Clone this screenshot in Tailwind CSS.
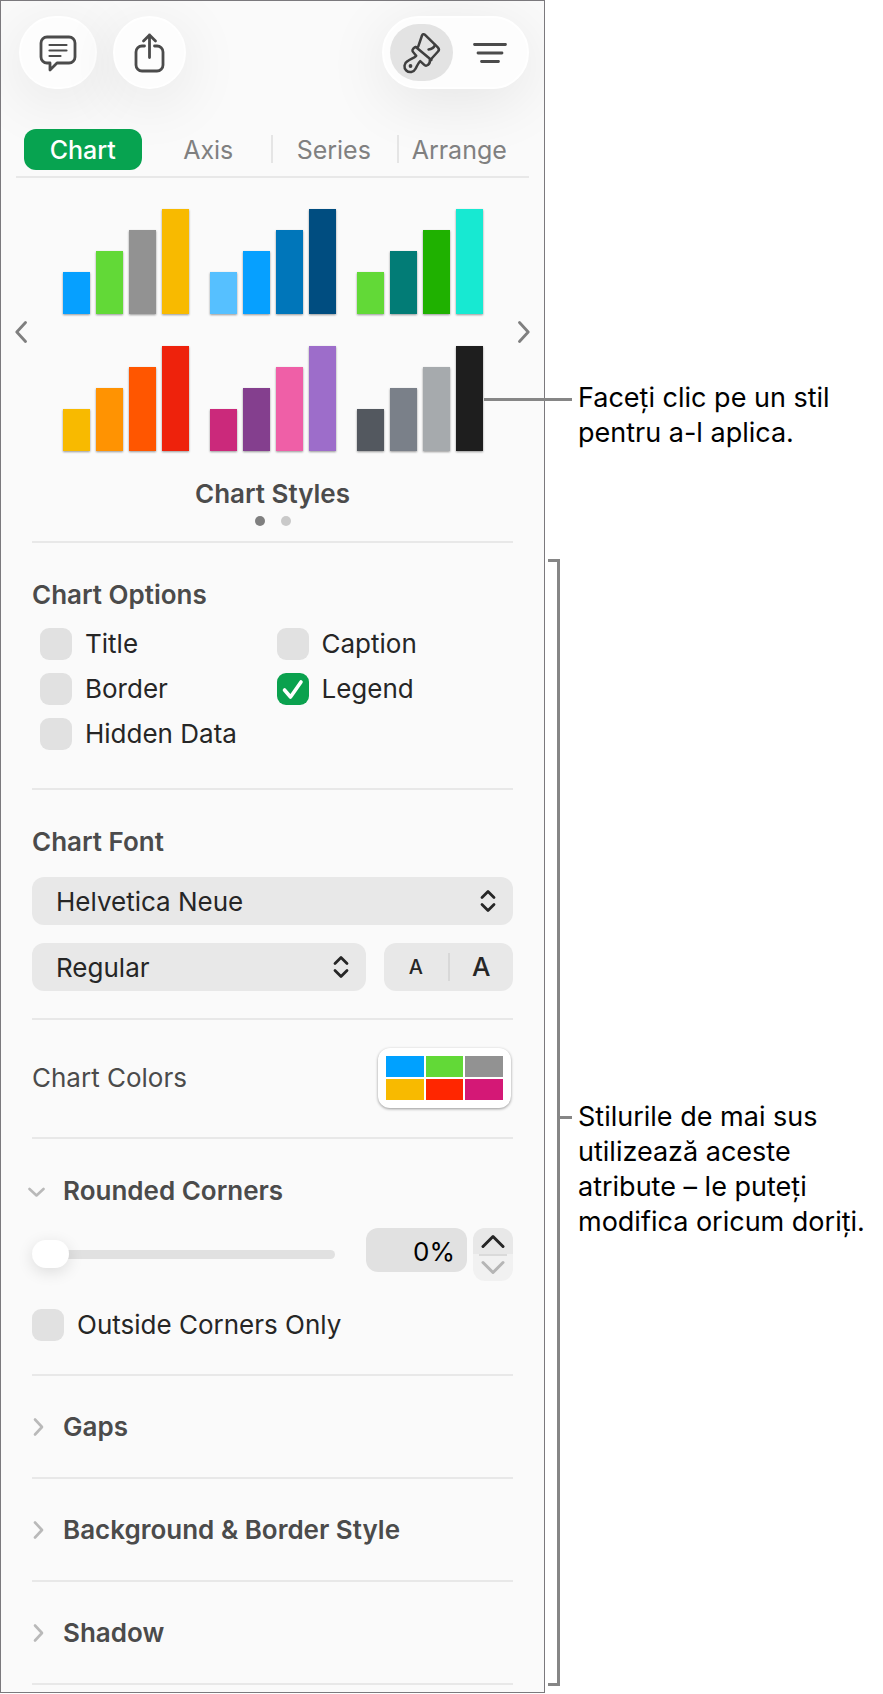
<!DOCTYPE html>
<html lang="ro">
<head>
    <meta charset="UTF-8">
    <meta name="viewport" content="width=device-width, initial-scale=1.0">
    <title>Chart Styles</title>
    <script src="https://cdn.jsdelivr.net/npm/@tailwindcss/browser@4"></script>
</head>
<body class="bg-white font-['Inter','Liberation_Sans',sans-serif] text-[26px] leading-8 text-[#262626]">
    <div class="flex">
        <!-- Format sidebar -->
        <main class="flex-1 min-w-0 bg-[#fafafa] border border-[#7b797d] overflow-hidden">
            <!-- Toolbar -->
            <header class="flex items-center pt-[15px] pl-[18px] pr-[15px]">
                <button aria-label="Comment" class="flex items-center justify-center w-[78px] h-[73px] rounded-full bg-[#fdfdfd] border-2 border-white shadow-[0_12px_64px_rgba(0,0,0,0.09)]">
                    <svg class="w-[38px] h-[38px]" viewBox="0 0 38 38" fill="none" stroke="#4b4b4b" stroke-linecap="round" stroke-linejoin="round">
                        <path stroke-width="2.8" d="M8 3h22a6 6 0 0 1 6 6v14a6 6 0 0 1-6 6H18l-7 7v-7H8a6 6 0 0 1-6-6V9a6 6 0 0 1 6-6z" />
                        <path stroke-width="2.2" d="M10.500 11h17M10.500 16.500h17M10.500 22h11" />
                    </svg>
                </button>
                <button aria-label="Share" class="flex items-center justify-center ml-4 w-[73px] h-[73px] rounded-full bg-[#fdfdfd] border-2 border-white shadow-[0_12px_64px_rgba(0,0,0,0.09)]">
                    <svg class="w-8 h-10" viewBox="0 0 32 40" fill="none" stroke="#4b4b4b" stroke-width="2.8" stroke-linecap="round" stroke-linejoin="round">
                        <path d="M10.500 13H8a6 6 0 0 0-6 6v13a6 6 0 0 0 6 6h15a6 6 0 0 0 6-6V19a6 6 0 0 0-6-6h-2.500" />
                        <path d="M15.500 24.500V2M9.500 8l6-6 6 6" />
                    </svg>
                </button>
                <div class="flex items-center ml-auto w-[147px] h-[73px] pl-1.5 rounded-full bg-[#fdfdfd] border-2 border-white shadow-[0_12px_64px_rgba(0,0,0,0.09)]">
                    <button aria-label="Format" class="flex shrink-0 items-center justify-center w-[63px] h-[57px] rounded-full bg-[#e3e3e3]">
                        <svg class="w-10 h-[42px]" viewBox="0 0 40 42" fill="none" stroke="#3f3f3f" stroke-width="2.500" stroke-linecap="round" stroke-linejoin="round">
                            <path d="M16.200 14.600L20 3.500c.4-1.400 1.800-1.800 2.800-.8l13 12.600c1.300 1.300 1.400 2.900.2 4.200l-6.800 7.500" />
                            <path d="M26.500 17.500c3.200-.3 5.400-1.800 6.500-4.500" />
                            <path d="M13.800 15l15.600 13" />
                            <path d="M13.800 15c-1.200-.2-3.800 2.300-3.300 4 .3 1.200 2.600 3.200 3.700 4.800-2.200 2.200-5.600 3-8.700 5.400a5.800 5.800 0 1 0 8 7.600c1.700-2.900 2.500-5.700 4.700-7.700l3.800 3.600c1.100 1.100 2.700 1.200 3.900.2 2-1.500 2.300-3 1.900-4.900" />
                            <circle cx="8.500" cy="34" r="1.900" fill="#3f3f3f" stroke="none" />
                        </svg>
                    </button>
                    <button aria-label="Organize" class="flex flex-1 items-center justify-center h-[57px]">
                        <svg class="w-[34px] h-6" viewBox="0 0 34 24" fill="none" stroke="#4b4b4b" stroke-width="2.8" stroke-linecap="round">
                            <path d="M1.500 3.500h31M5 12h24M8.500 20.500h17" />
                        </svg>
                    </button>
                </div>
            </header>

            <!-- Tabs -->
            <nav class="grid grid-cols-4 mt-10 mx-[15px] pl-1 pr-[7px] pb-1.5 border-b-2 border-[#e8e8e8] text-center text-[25px] text-[#808080]">
                <button class="mx-auto w-[118px] h-[41px] rounded-xl bg-[#07a350] text-white font-medium">Chart</button>
                <button class="h-[41px]">Axis</button>
                <button class="relative h-[41px] before:absolute before:left-0 before:top-1.5 before:h-7 before:w-0.5 before:bg-[#e5e5e5]">Series</button>
                <button class="relative h-[41px] before:absolute before:left-0 before:top-1.5 before:h-7 before:w-0.5 before:bg-[#e5e5e5]">Arrange</button>
            </nav>

            <!-- Chart style thumbnails -->
            <section class="mt-[31px] px-3.5">
                <div class="flex items-center justify-between">
                    <button aria-label="Previous styles" class="pt-1">
                        <svg class="w-3 h-6" viewBox="0 0 12 24" fill="none" stroke="#7f7f7f" stroke-width="2.8" stroke-linecap="round" stroke-linejoin="round">
                            <path d="M10.500 2.500L1.800 12l8.700 9.500" />
                        </svg>
                    </button>
                    <div class="grid grid-cols-3 gap-x-[21px] gap-y-8">
                        <button aria-label="Style 1" class="flex items-end gap-1.5 h-[105px] *:w-[27px] *:shadow-[0_1px_2px_rgba(0,0,0,0.4)]">
                            <span class="h-[42px] bg-[#06a0ff]"></span>
                            <span class="h-[63px] bg-[#62d937]"></span>
                            <span class="h-[84px] bg-[#929292]"></span>
                            <span class="h-[105px] bg-[#f8ba00]"></span>
                        </button>
                        <button aria-label="Style 2" class="flex items-end gap-1.5 h-[105px] *:w-[27px] *:shadow-[0_1px_2px_rgba(0,0,0,0.4)]">
                            <span class="h-[42px] bg-[#56c0ff]"></span>
                            <span class="h-[63px] bg-[#06a0ff]"></span>
                            <span class="h-[84px] bg-[#0076ba]"></span>
                            <span class="h-[105px] bg-[#004d80]"></span>
                        </button>
                        <button aria-label="Style 3" class="flex items-end gap-1.5 h-[105px] *:w-[27px] *:shadow-[0_1px_2px_rgba(0,0,0,0.4)]">
                            <span class="h-[42px] bg-[#62d937]"></span>
                            <span class="h-[63px] bg-[#027c76]"></span>
                            <span class="h-[84px] bg-[#1fb100]"></span>
                            <span class="h-[105px] bg-[#17e9d2]"></span>
                        </button>
                        <button aria-label="Style 4" class="flex items-end gap-1.5 h-[105px] *:w-[27px] *:shadow-[0_1px_2px_rgba(0,0,0,0.4)]">
                            <span class="h-[42px] bg-[#f8ba00]"></span>
                            <span class="h-[63px] bg-[#ff9302]"></span>
                            <span class="h-[84px] bg-[#ff5600]"></span>
                            <span class="h-[105px] bg-[#ee220c]"></span>
                        </button>
                        <button aria-label="Style 5" class="flex items-end gap-1.5 h-[105px] *:w-[27px] *:shadow-[0_1px_2px_rgba(0,0,0,0.4)]">
                            <span class="h-[42px] bg-[#cb297b]"></span>
                            <span class="h-[63px] bg-[#843f8e]"></span>
                            <span class="h-[84px] bg-[#ef5fa7]"></span>
                            <span class="h-[105px] bg-[#9d6dca]"></span>
                        </button>
                        <button aria-label="Style 6" class="flex items-end gap-1.5 h-[105px] *:w-[27px] *:shadow-[0_1px_2px_rgba(0,0,0,0.4)]">
                            <span class="h-[42px] bg-[#53585f]"></span>
                            <span class="h-[63px] bg-[#7a8089]"></span>
                            <span class="h-[84px] bg-[#a6aaad]"></span>
                            <span class="h-[105px] bg-[#1e1e1e]"></span>
                        </button>
                    </div>
                    <button aria-label="Next styles" class="pt-1">
                        <svg class="w-3 h-6" viewBox="0 0 12 24" fill="none" stroke="#7f7f7f" stroke-width="2.8" stroke-linecap="round" stroke-linejoin="round">
                            <path d="M1.500 2.500L10.200 12l-8.700 9.500" />
                        </svg>
                    </button>
                </div>
                <h2 class="mt-[27px] text-center font-semibold text-[#4b4b4b]">Chart Styles</h2>
                <div class="flex justify-center gap-4 mt-1.5">
                    <span class="size-2.5 rounded-full bg-[#7f7f7f]"></span>
                    <span class="size-2.5 rounded-full bg-[#c9c9c9]"></span>
                </div>
            </section>

            <div class="mx-[31px] mt-[15px] border-t-2 border-[#e8e8e8] *:border-b-2 *:border-[#e8e8e8]">
                <!-- Chart Options -->
                <section class="pt-9 pb-[38px]">
                    <h2 class="font-semibold text-[#4b4b4b]">Chart Options</h2>
                    <div class="grid grid-cols-2 gap-y-[13px] mt-[17px] pl-2">
                        <label class="flex items-center gap-[13px]">
                            <input type="checkbox" class="appearance-none size-8 rounded-[9px] bg-[#e1e1e1]">
                            Title
                        </label>
                        <label class="flex items-center gap-[13px]">
                            <input type="checkbox" class="appearance-none size-8 rounded-[9px] bg-[#e1e1e1]">
                            Caption
                        </label>
                        <label class="flex items-center gap-[13px]">
                            <input type="checkbox" class="appearance-none size-8 rounded-[9px] bg-[#e1e1e1]">
                            Border
                        </label>
                        <label class="relative flex items-center gap-[13px]">
                            <input type="checkbox" checked class="appearance-none size-8 rounded-[9px] bg-[#e1e1e1] checked:bg-[#0aa14e]">
                            <svg class="absolute left-0 top-0 size-8 pointer-events-none" viewBox="0 0 32 32" fill="none" stroke="white" stroke-width="3.6" stroke-linecap="round" stroke-linejoin="round">
                                <path d="M7.500 17l6 7L24 9" />
                            </svg>
                            Legend
                        </label>
                        <label class="flex items-center gap-[13px]">
                            <input type="checkbox" class="appearance-none size-8 rounded-[9px] bg-[#e1e1e1]">
                            Hidden Data
                        </label>
                    </div>
                </section>

                <!-- Chart Font -->
                <section class="pt-9 pb-[27px]">
                    <h2 class="font-semibold text-[#4b4b4b]">Chart Font</h2>
                    <div class="relative mt-[19px]">
                        <select aria-label="Font family" class="appearance-none block w-full h-12 pt-0.5 pl-6 rounded-xl bg-[#e8e8e8]">
                            <option>Helvetica Neue</option>
                        </select>
                        <svg class="absolute right-[17px] top-3 w-4 h-6 pointer-events-none" viewBox="0 0 16 24" fill="none" stroke="#262626" stroke-width="2.8" stroke-linecap="round" stroke-linejoin="round">
                            <path d="M2 8.500l6-6 6 6M2 15.500l6 6 6-6" />
                        </svg>
                    </div>
                    <div class="flex gap-[18px] mt-[18px]">
                        <div class="relative flex-1">
                            <select aria-label="Typeface" class="appearance-none block w-full h-12 pt-0.5 pl-6 rounded-xl bg-[#e8e8e8]">
                                <option>Regular</option>
                            </select>
                            <svg class="absolute right-[17px] top-3 w-4 h-6 pointer-events-none" viewBox="0 0 16 24" fill="none" stroke="#262626" stroke-width="2.8" stroke-linecap="round" stroke-linejoin="round">
                                <path d="M2 8.500l6-6 6 6M2 15.500l6 6 6-6" />
                            </svg>
                        </div>
                        <div class="flex items-center w-[129px] h-12 rounded-xl bg-[#e8e8e8] font-medium">
                            <button aria-label="Smaller" class="flex-1 text-[20px]">A</button>
                            <span class="w-0.5 h-7 bg-[#d8d8d8]"></span>
                            <button aria-label="Bigger" class="flex-1 text-[26px]">A</button>
                        </div>
                    </div>
                </section>

                <!-- Chart Colors -->
                <section class="flex items-center justify-between pt-7 pb-[29px] pr-0.5">
                    <h2 class="text-[#4b4b4b]">Chart Colors</h2>
                    <button aria-label="Chart Colors" class="grid grid-cols-3 gap-0.5 w-[133px] h-[60px] p-2 rounded-xl bg-white shadow-[0_1px_3px_rgba(0,0,0,0.4)]">
                        <span class="h-[21px] bg-[#00a1ff]"></span>
                        <span class="h-[21px] bg-[#62d937]"></span>
                        <span class="h-[21px] bg-[#929292]"></span>
                        <span class="h-[21px] bg-[#f8ba00]"></span>
                        <span class="h-[21px] bg-[#ff2600]"></span>
                        <span class="h-[21px] bg-[#d41876]"></span>
                    </button>
                </section>

                <!-- Rounded Corners -->
                <section class="pt-9 pb-[33px]">
                    <button aria-expanded="true" class="flex items-center gap-[15px] -ml-1 font-semibold text-[#4b4b4b]">
                        <svg class="size-5" viewBox="0 0 20 20" fill="none" stroke="#b9b9b9" stroke-width="2.6" stroke-linecap="round" stroke-linejoin="round">
                            <path d="M1.500 8l7 6.500 7-6.500" />
                        </svg>
                        Rounded Corners
                    </button>
                    <div class="flex items-center mt-[21px]">
                        <input type="range" aria-label="Rounded Corners" min="0" max="100" value="0" class="appearance-none flex-1 min-w-0 h-7 bg-transparent [&::-webkit-slider-runnable-track]:h-[9px] [&::-webkit-slider-runnable-track]:rounded-full [&::-webkit-slider-runnable-track]:bg-[#e1e1e1] [&::-webkit-slider-thumb]:appearance-none [&::-webkit-slider-thumb]:-mt-2.5 [&::-webkit-slider-thumb]:w-[37px] [&::-webkit-slider-thumb]:h-7 [&::-webkit-slider-thumb]:rounded-full [&::-webkit-slider-thumb]:bg-white [&::-webkit-slider-thumb]:shadow-[0_4px_16px_rgba(0,0,0,0.12)]">
                        <input type="text" aria-label="Corner radius" value="0%" class="self-start ml-[31px] w-[101px] h-11 pt-0.5 pr-3 rounded-xl bg-[#e1e1e1] text-right text-black">
                        <div class="ml-1.5 flex flex-col w-10 h-[53px] rounded-xl overflow-hidden bg-[#f1f1f1]">
                            <button aria-label="Increase" class="flex flex-1 items-center justify-center bg-[#e8e8e8]">
                                <svg class="w-6 h-4" viewBox="0 0 24 16" fill="none" stroke="#262626" stroke-width="3" stroke-linecap="round" stroke-linejoin="round">
                                    <path d="M2 13.500l10-10 10 10" />
                                </svg>
                            </button>
                            <span class="mx-1.5 h-0.5 bg-[#dadada]"></span>
                            <button aria-label="Decrease" class="flex flex-1 items-center justify-center">
                                <svg class="w-6 h-4" viewBox="0 0 24 16" fill="none" stroke="#b5b5b5" stroke-width="3" stroke-linecap="round" stroke-linejoin="round">
                                    <path d="M2 2.500l10 10 10-10" />
                                </svg>
                            </button>
                        </div>
                    </div>
                    <label class="flex items-center gap-[13px] mt-7">
                        <input type="checkbox" class="appearance-none size-8 rounded-[9px] bg-[#e1e1e1]">
                        Outside Corners Only
                    </label>
                </section>

                <!-- Collapsed groups -->
                <button aria-expanded="false" class="flex items-center gap-[15px] w-full h-[103px] font-semibold text-[#4b4b4b]">
                    <svg class="-ml-1 size-5" viewBox="0 0 20 20" fill="none" stroke="#b9b9b9" stroke-width="2.6" stroke-linecap="round" stroke-linejoin="round">
                        <path d="M7 2.500l7 7.500-7 7.500" />
                    </svg>
                    Gaps
                </button>
                <button aria-expanded="false" class="flex items-center gap-[15px] w-full h-[103px] font-semibold text-[#4b4b4b]">
                    <svg class="-ml-1 size-5" viewBox="0 0 20 20" fill="none" stroke="#b9b9b9" stroke-width="2.6" stroke-linecap="round" stroke-linejoin="round">
                        <path d="M7 2.500l7 7.500-7 7.500" />
                    </svg>
                    Background &amp; Border Style
                </button>
                <button aria-expanded="false" class="flex items-center gap-[15px] w-full h-[103px] mb-[7px] font-semibold text-[#4b4b4b]">
                    <svg class="-ml-1 size-5" viewBox="0 0 20 20" fill="none" stroke="#b9b9b9" stroke-width="2.6" stroke-linecap="round" stroke-linejoin="round">
                        <path d="M7 2.500l7 7.500-7 7.500" />
                    </svg>
                    Shadow
                </button>
            </div>
        </main>

        <!-- Callouts -->
        <aside class="flex flex-col w-[338px] pb-[7px] text-[27px] leading-[35px] text-black">
            <div class="relative pt-[380px] pl-[33px]">
                <span class="absolute right-[311px] top-[398px] w-[88px] h-[3px] bg-[#868686]"></span>
                <p>Faceți clic pe un stil<br>pentru a-l aplica.</p>
            </div>
            <div class="flex flex-1 mt-[109px] pl-[3px]">
                <div class="w-3 border-[3px] border-l-0 border-[#868686]"></div>
                <div class="mt-[557px] w-3 h-[3px] bg-[#868686]"></div>
                <p class="mt-[540px] ml-1.5 whitespace-nowrap">Stilurile de mai sus<br>utilizează aceste<br>atribute – le puteți<br>modifica oricum doriți.</p>
            </div>
        </aside>
    </div>
</body>
</html>
